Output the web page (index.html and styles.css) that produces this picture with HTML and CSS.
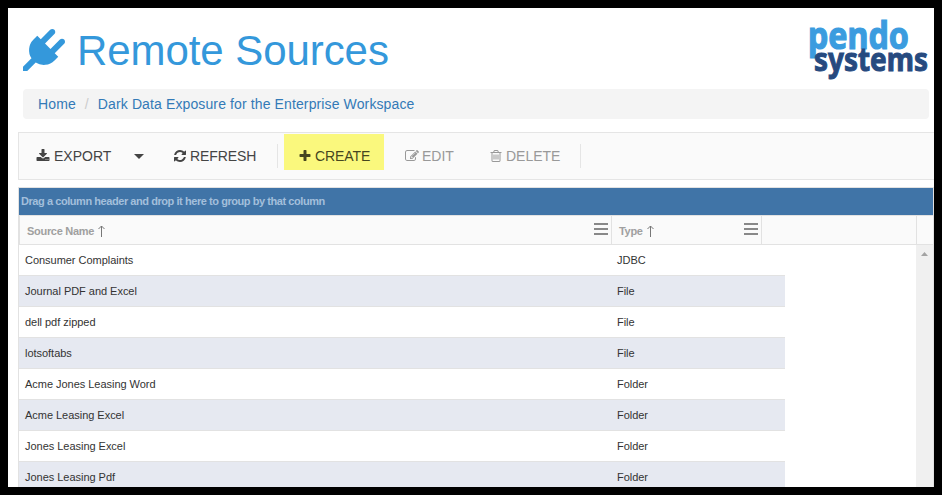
FILE: index.html
```html
<!DOCTYPE html>
<html lang="en">
<head>
<meta charset="utf-8">
<title>Remote Sources</title>
<link rel="stylesheet" href="styles.css">
</head>
<body>
<main class="page">
  <header class="header">
    <h1 class="title">
      <svg class="plug" viewBox="0 0 1792 1792"><path d="M1755 453q37 38 37 90.500t-37 90.500l-401 400 150 150-160 160q-163 163-389.500 186.500t-411.500-100.500l-362 362h-181v-181l362-362q-124-185-100.500-411.500t186.500-389.500l160-160 150 150 400-401q38-37 91-37t90 37 37 90.500-37 90.500l-400 401 234 234 401-400q38-37 91-37t90 37z"/></svg>
      <span>Remote Sources</span>
    </h1>
    <svg class="logo" width="126" height="71" viewBox="0 0 126 71">
      <text class="logo-top" x="2" y="31.500" textLength="101" lengthAdjust="spacingAndGlyphs">pendo</text>
      <text class="logo-bottom" x="8" y="53.500" textLength="114" lengthAdjust="spacingAndGlyphs">systems</text>
    </svg>
  </header>
  <nav class="breadcrumb"><a>Home</a><span class="slash">/</span><a class="crumb">Dark Data Exposure for the Enterprise Workspace</a></nav>
  <div class="toolbar">
    <div class="tool export"><svg class="icon" viewBox="0 0 1792 1792"><path d="M1344 1344q0-26-19-45t-45-19-45 19-19 45 19 45 45 19 45-19 19-45zm256 0q0-26-19-45t-45-19-45 19-19 45 19 45 45 19 45-19 19-45zm128-224v320q0 40-28 68t-68 28h-1472q-40 0-68-28t-28-68v-320q0-40 28-68t68-28h465l135 136q58 56 136 56t136-56l136-136h464q40 0 68 28t28 68zm-325-569q17 41-14 70l-448 448q-18 19-45 19t-45-19l-448-448q-31-29-14-70 17-39 59-39h256v-448q0-26 19-45t45-19h256q26 0 45 19t19 45v448h256q42 0 59 39z"/></svg><span>EXPORT</span></div>
    <div class="caret"></div>
    <div class="tool refresh"><svg class="icon" viewBox="0 0 1792 1792"><path d="M1639 1056q0 5-1 7-64 268-268 434.500t-478 166.500q-146 0-282.500-55t-243.500-157l-129 129q-19 19-45 19t-45-19-19-45v-448q0-26 19-45t45-19h448q26 0 45 19t19 45-19 45l-137 137q71 66 161 102t187 36q134 0 250-65t186-179q11-17 53-117 8-23 30-23h192q13 0 22.500 9.500t9.500 22.500zm25-800v448q0 26-19 45t-45 19h-448q-26 0-45-19t-19-45 19-45l138-138q-148-137-349-137-134 0-250 65t-186 179q-11 17-53 117-8 23-30 23h-199q-13 0-22.500-9.500t-9.500-22.500v-7q65-268 270-434.500t480-166.500q146 0 284 55.500t245 156.500l130-129q19-19 45-19t45 19 19 45z"/></svg><span>REFRESH</span></div>
    <div class="divider"></div>
    <div class="tool create"><svg class="icon" viewBox="0 0 1792 1792"><path d="M1600 736v192q0 40-28 68t-68 28h-416v416q0 40-28 68t-68 28h-192q-40 0-68-28t-28-68v-416h-416q-40 0-68-28t-28-68v-192q0-40 28-68t68-28h416v-416q0-40 28-68t68-28h192q40 0 68 28t28 68v416h416q40 0 68 28t28 68z"/></svg><span>CREATE</span></div>
    <div class="tool edit disabled"><svg class="icon" viewBox="0 0 1792 1792"><path d="M888 1184l116-116-152-152-116 116v56h96v96h56zm440-720q-16-16-33 1l-350 350q-17 17-1 33t33-1l350-350q17-17 1-33zm80 594v190q0 119-84.500 203.500t-203.500 84.500h-832q-119 0-203.500-84.500t-84.500-203.500v-832q0-119 84.500-203.500t203.500-84.500h832q63 0 117 25 15 7 18 23 3 17-9 29l-49 49q-14 14-32 8-23-6-45-6h-832q-66 0-113 47t-47 113v832q0 66 47 113t113 47h832q66 0 113-47t47-113v-126q0-13 9-22l64-64q15-15 35-7t20 29zm-96-738l288 288-672 672h-288v-288zm444 132l-92 92-288-288 92-92q28-28 68-28t68 28l152 152q28 28 28 68t-28 68z"/></svg><span>EDIT</span></div>
    <div class="tool delete disabled"><svg class="icon" viewBox="0 0 1792 1792"><path d="M704 736v576q0 14-9 23t-23 9h-64q-14 0-23-9t-9-23v-576q0-14 9-23t23-9h64q14 0 23 9t9 23zm256 0v576q0 14-9 23t-23 9h-64q-14 0-23-9t-9-23v-576q0-14 9-23t23-9h64q14 0 23 9t9 23zm256 0v576q0 14-9 23t-23 9h-64q-14 0-23-9t-9-23v-576q0-14 9-23t23-9h64q14 0 23 9t9 23zm128 724v-948h-896v948q0 22 7 40.500t14.500 27 10.500 8.500h832q3 0 10.500-8.500t14.500-27 7-40.500zm-672-1076h448l-48-117q-7-9-17-11h-317q-10 2-17 11zm928 32v64q0 14-9 23t-23 9h-96v948q0 83-47 143.500t-113 60.500h-832q-66 0-113-58.500t-47-141.500v-952h-96q-14 0-23-9t-9-23v-64q0-14 9-23t23-9h309l70-167q15-37 54-63t79-26h320q40 0 79 26t54 63l70 167h309q14 0 23 9t9 23z"/></svg><span>DELETE</span></div>
    <div class="divider last"></div>
  </div>
  <section class="grid">
    <div class="group-bar">Drag a column header and drop it here to group by that column</div>
    <div class="head">
      <div class="th name"><span class="name-label">Source Name</span><svg class="arrow" viewBox="0 0 7 13"><path d="M3.500 12V1M.5 4l3-3 3 3"/></svg><i class="menu"></i></div>
      <div class="th type"><span>Type</span><svg class="arrow" viewBox="0 0 7 13"><path d="M3.500 12V1M.5 4l3-3 3 3"/></svg><i class="menu"></i></div>
      <div class="th rest"></div>
      <div class="th end"></div>
    </div>
    <div class="body">
      <div class="rows">
        <div class="row"><span>Consumer Complaints</span><span>JDBC</span></div>
        <div class="row"><span>Journal PDF and Excel</span><span>File</span></div>
        <div class="row"><span>dell pdf zipped</span><span>File</span></div>
        <div class="row"><span>lotsoftabs</span><span>File</span></div>
        <div class="row"><span>Acme Jones Leasing Word</span><span>Folder</span></div>
        <div class="row"><span>Acme Leasing Excel</span><span>Folder</span></div>
        <div class="row"><span>Jones Leasing Excel</span><span>Folder</span></div>
        <div class="row"><span>Jones Leasing Pdf</span><span>Folder</span></div>
      </div>
      <div class="scrollbar"><i class="up"></i></div>
    </div>
  </section>
</main>
</body>
</html>
```
FILE: styles.css
```css
* { box-sizing: border-box; }
body {
  margin: 0;
  height: 495px;
  padding: 8px;
  background: #000;
  overflow: hidden;
  font-family: "Liberation Sans", Arial, sans-serif;
  font-size: 14px;
}
.page { width: 926px; height: 479px; background: #fff; overflow: hidden; }
.header { display: flex; justify-content: space-between; height: 81px; padding: 9px 2px 0 15px; }
.title { display: flex; margin: 0; color: #3498db; font-size: 42px; font-weight: 400; line-height: 48px; }
.title span { margin: 10px 0 0 12px; white-space: nowrap; letter-spacing: -.07px; }
.plug { width: 42px; height: 42px; margin-top: 12px; fill: currentColor; }
.logo { font-family: "Noto Sans", sans-serif; font-weight: 700; overflow: visible; }
.logo-top { font-size: 37px; fill: #3b9cdf; stroke: #3b9cdf; stroke-width: 1.2px; }
.logo-bottom { font-size: 32px; fill: #264a7f; stroke: #264a7f; stroke-width: 1px; }
.breadcrumb { display: flex; align-items: center; height: 30px; margin: 0 5px 0 15px; padding-left: 15px; border-radius: 4px; background: #f4f4f4; color: #337ab7; letter-spacing: .12px; }
.slash { width: 22px; color: #ccc; text-align: center; }
.toolbar { display: flex; height: 48px; margin: 13px 0 0 10px; padding-left: 17px; border: 1px solid #e5e5e5; border-right: 0; background: #fafafa; color: #444; }
.tool { display: flex; align-items: center; height: 46px; flex: none; }
.tool span { white-space: nowrap; }
.icon { width: 14px; height: 14px; margin-right: 3px; fill: currentColor; }
.export { width: 98px; }
.export .icon { margin-right: 4px; }
.caret { width: 10px; height: 5px; margin: 21px 29px 0 0; background: #444; clip-path: polygon(0 0, 100% 0, 50% 100%); }
.refresh { width: 104px; letter-spacing: -.1px; }
.divider { width: 1px; height: 24px; margin-top: 11px; background: #e5e5e5; }
.create { width: 100px; height: 36px; margin: 1px 0 0 6px; padding: 8px 0 0 14px; background: #faf87d; color: #46461f; letter-spacing: -.1px; }
.disabled { color: #999; }
.edit { width: 84px; margin-left: 21px; }
.delete { width: 91px; }
.grid { margin: 7px 0 0 10px; border: 1px solid #e2e2e2; }
.group-bar { height: 27px; padding-left: 2px; background: #4074a7; color: #a3bfdb; font-size: 11px; font-weight: 700; line-height: 27px; letter-spacing: -.44px; }
.head { display: flex; height: 30px; border: solid #e2e2e2; border-width: 1px 0 1px 1px; background: #fafafa; color: #a0a0a0; font-size: 11px; font-weight: 700; letter-spacing: -.3px; }
.th { display: flex; align-items: center; border-right: 1px solid #e2e2e2; padding: 2px 3px 0 7px; }
.name { width: 592px; }
.type { width: 150px; }
.rest { width: 155px; }
.end { width: 16px; border: 0; }
.arrow { width: 7px; height: 13px; margin-left: 4px; fill: none; stroke: #777; stroke-width: 1; }
.menu { width: 14px; height: 12px; margin: -5px 0 0 auto; background: linear-gradient(#888 2px, transparent 2px 5px, #888 5px 7px, transparent 7px 10px, #888 10px); }
.body { display: flex; justify-content: space-between; height: 243px; }
.rows { width: 766px; }
.row { display: grid; grid-template-columns: 592px 1fr; height: 31px; padding-left: 6px; border: 1px solid #e2e2e2; border-width: 0 0 1px; color: #333; font-size: 11px; line-height: 31px; letter-spacing: -.03px; }
.row:nth-child(even) { background: #e6e9f1; }
.scrollbar { width: 17px; background: #f0f0f0; padding: 7px 0 0 5px; }
.up { display: block; width: 7px; height: 4px; background: #a3a3a3; clip-path: polygon(50% 0, 100% 100%, 0 100%); }
```
